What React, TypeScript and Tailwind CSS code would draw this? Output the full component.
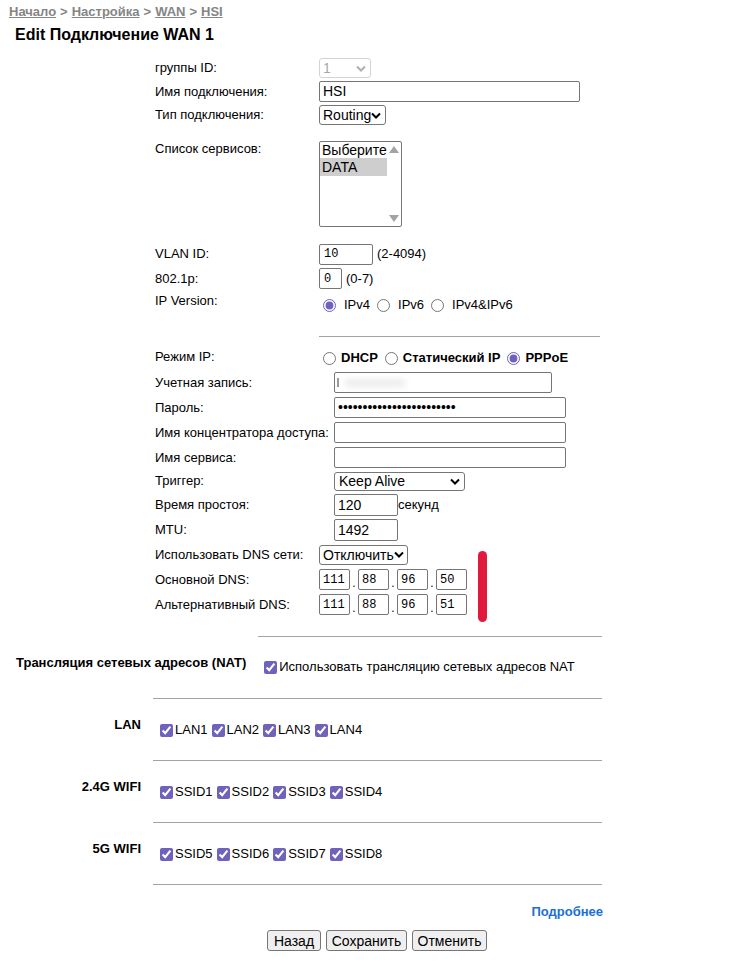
import React from "react";

function Chevron({ color = "#000" }: { color?: string }) {
  return (
    <svg width="10" height="7" viewBox="0 0 10 7" className="shrink-0">
      <path d="M1 1.5 L5 5.5 L9 1.5" fill="none" stroke={color} strokeWidth="2" />
    </svg>
  );
}

function FakeSelect({ value, className, disabled }: { value: string; className: string; disabled?: boolean }) {
  return (
    <div
      className={
        "flex items-center justify-between rounded-[3px] border bg-white pl-[3px] pr-[4px] text-[14px] leading-none " +
        (disabled ? "border-[#d4d4d4] text-[#a8a8a8] " : "border-[#767676] text-black ") +
        className
      }
    >
      <span>{value}</span>
      <Chevron color={disabled ? "#b0b0b0" : "#000"} />
    </div>
  );
}

function TextBox({ value = "", className, mono, type = "text" }: { value?: string; className: string; mono?: boolean; type?: string }) {
  return (
    <input
      type={type}
      readOnly
      value={value}
      className={
        "h-[21px] rounded-[2px] border border-[#767676] bg-white px-[3px] outline-none " +
        (mono ? "font-['Liberation_Mono'] text-[12px] " : "text-[14px] ") +
        className
      }
    />
  );
}

function Radio({ checked, label, bold }: { checked?: boolean; label: string; bold?: boolean }) {
  return (
    <label className="flex items-center">
      <input type="radio" readOnly checked={!!checked} className="m-0 h-[13px] w-[13px] accent-[#6f62bd]" />
      <span className={"ml-[5px] mr-[7px] " + (bold ? "font-bold" : "ml-[8px]")}>{label}</span>
    </label>
  );
}

function Check({ label }: { label: string }) {
  return (
    <label className="mr-[4px] flex items-center">
      <input type="checkbox" readOnly checked className="m-0 h-[13px] w-[13px] accent-[#6f62bd]" />
      <span className="ml-[2px]">{label}</span>
    </label>
  );
}

function Row({ label, w, h, children }: { label: string; w: string; h: string; children: React.ReactNode }) {
  return (
    <div className={"flex items-center " + h}>
      <div className={"shrink-0 " + w}>{label}</div>
      {children}
    </div>
  );
}

function IpBoxes({ last }: { last: string }) {
  const parts = ["111", "88", "96", last];
  return (
    <div className="flex items-center">
      {parts.map((p, i) => (
        <React.Fragment key={i}>
          <TextBox value={p} mono className="w-[31px] px-[2px]" />
          {i < 3 && <span className="w-[8px] text-center text-[12px] leading-none pt-[6px]">.</span>}
        </React.Fragment>
      ))}
    </div>
  );
}

function Section({ label, items }: { label: string; items: string[] }) {
  return (
    <div className="h-[62px] border-t border-[#a3a3a3] ml-[153px] w-[449px]">
      <div className="-ml-[153px] flex items-start pt-[18px]">
        <div className="w-[141px] text-right font-bold leading-[16px]">{label}</div>
        <div className="ml-[19px] flex pt-[5px] leading-[16px]">
          {items.map((it) => (
            <Check key={it} label={it} />
          ))}
        </div>
      </div>
    </div>
  );
}

export default function App() {
  return (
    <div className="relative min-h-[971px] w-[742px] bg-white font-['Liberation_Sans',Arial,sans-serif] text-[13px] text-black">
      <div className="flex h-[24px] items-center pl-[9px] font-bold text-[#858585]">
        <a className="underline">Начало</a>
        <span className="mx-[4px]">&gt;</span>
        <a className="underline">Настройка</a>
        <span className="mx-[4px]">&gt;</span>
        <a className="underline">WAN</a>
        <span className="mx-[4px]">&gt;</span>
        <a className="underline">HSI</a>
      </div>
      <h1 className="flex h-[22px] items-center pl-[15px] text-[16px] font-bold">Edit Подключение WAN 1</h1>

      <div className="pl-[155px] pt-[10px]">
        <Row label="группы ID:" w="w-[164px]" h="h-[24px]">
          <FakeSelect value="1" disabled className="h-[20px] w-[52px]" />
        </Row>
        <Row label="Имя подключения:" w="w-[164px]" h="h-[23px]">
          <TextBox value="HSI" className="w-[261px]" />
        </Row>
        <Row label="Тип подключения:" w="w-[164px]" h="h-[24px]">
          <FakeSelect value="Routing" className="h-[20px] w-[67px]" />
        </Row>

        <div className="mt-[14px] flex items-start">
          <div className="w-[164px] leading-[15px]">Список сервисов:</div>
          <div className="flex h-[86px] w-[83px] rounded-[2px] border border-[#767676] bg-white text-[14px]">
            <div className="flex-1">
              <div className="pl-[2px] leading-[16px]">Выберите</div>
              <div className="bg-[#cecece] pl-[2px] leading-[18px]">DATA</div>
            </div>
            <div className="flex w-[15px] flex-col items-center justify-between py-[4px]">
              <svg width="10" height="7" viewBox="0 0 10 7"><path d="M5 0 L10 7 L0 7 Z" fill="#a3a3a3" /></svg>
              <svg width="10" height="7" viewBox="0 0 10 7"><path d="M0 0 L10 0 L5 7 Z" fill="#a3a3a3" /></svg>
            </div>
          </div>
        </div>

        <div className="mt-[15px] flex h-[24px] items-center">
          <div className="w-[164px]">VLAN ID:</div>
          <TextBox value="10" mono className="h-[20px] w-[54px] px-[4px]" />
          <span className="ml-[4px]">(2-4094)</span>
        </div>
        <div className="flex h-[25px] items-center">
          <div className="w-[164px]">802.1p:</div>
          <TextBox value="0" mono className="h-[20px] w-[23px] px-[4px]" />
          <span className="ml-[4px]">(0-7)</span>
        </div>
        <div className="flex h-[23px] items-start">
          <div className="w-[168px] pt-[2px] leading-[16px]">IP Version:</div>
          <div className="flex pt-[6px] leading-[16px]">
            <Radio checked label="IPv4" />
            <Radio label="IPv6" />
            <Radio label="IPv4&IPv6" />
          </div>
        </div>

        <div className="ml-[164px] mt-[22px] w-[281px] border-t border-[#a3a3a3]" />

        <div className="mt-[10px] flex h-[20px] items-center">
          <div className="w-[168px]">Режим IP:</div>
          <div className="flex pt-[2px]">
            <Radio label="DHCP" bold />
            <Radio label="Статический IP" bold />
            <Radio checked label="PPPoE" bold />
          </div>
        </div>

        <div className="mt-[3px]">
          <Row label="Учетная запись:" w="w-[179px]" h="h-[25px]">
            <div className="flex h-[21px] w-[218px] items-center rounded-[2px] border border-[#767676] pl-[2px]">
              <span className="h-[9px] w-[2px] bg-[#9a9a9a] blur-[0.5px]" />
              <span className="ml-[6px] h-[8px] w-[60px] bg-[#ececec] blur-[3px]" />
            </div>
          </Row>
          <Row label="Пароль:" w="w-[179px]" h="h-[25px]">
            <TextBox type="password" value="abcdefghijklmnopqrstuvwx" className="w-[232px] text-[11px]" />
          </Row>
          <Row label="Имя концентратора доступа:" w="w-[179px]" h="h-[25px]">
            <TextBox className="w-[232px]" />
          </Row>
          <Row label="Имя сервиса:" w="w-[179px]" h="h-[25px]">
            <TextBox className="w-[232px]" />
          </Row>
          <Row label="Триггер:" w="w-[179px]" h="h-[22px]">
            <FakeSelect value="Keep Alive" className="h-[19px] w-[131px] pl-[4px]" />
          </Row>
          <Row label="Время простоя:" w="w-[179px]" h="h-[25px]">
            <TextBox value="120" className="h-[22px] w-[64px]" />
            <span>секунд</span>
          </Row>
          <Row label="MTU:" w="w-[179px]" h="h-[25px]">
            <TextBox value="1492" className="h-[22px] w-[64px]" />
          </Row>
        </div>

        <Row label="Использовать DNS сети:" w="w-[164px]" h="h-[25px]">
          <FakeSelect value="Отключить" className="h-[20px] w-[89px]" />
        </Row>
        <Row label="Основной DNS:" w="w-[164px]" h="h-[25px]">
          <IpBoxes last="50" />
        </Row>
        <Row label="Альтернативный DNS:" w="w-[164px]" h="h-[25px]">
          <IpBoxes last="51" />
        </Row>
      </div>

      <div className="ml-[258px] mt-[19px] h-[62px] w-[344px] border-t border-[#a3a3a3]">
        <div className="-ml-[242px] flex items-start pt-[18px]">
          <div className="font-bold leading-[16px]">Трансляция сетевых адресов (NAT)</div>
          <div className="ml-[18px] pt-[4px] leading-[16px]">
            <Check label="Использовать трансляцию сетевых адресов NAT" />
          </div>
        </div>
      </div>

      <Section label="LAN" items={["LAN1", "LAN2", "LAN3", "LAN4"]} />
      <Section label="2.4G WIFI" items={["SSID1", "SSID2", "SSID3", "SSID4"]} />
      <Section label="5G WIFI" items={["SSID5", "SSID6", "SSID7", "SSID8"]} />
      <div className="ml-[153px] w-[449px] border-t border-[#a3a3a3]" />

      <div className="mt-[19px] w-[603px] text-right font-bold leading-[16px] text-[#1a6fd6]">
        <a>Подробнее</a>
      </div>
      <div className="ml-[267px] mt-[10px] flex gap-[5px] text-[14px]">
        <button className="h-[21px] w-[54px] rounded-[3px] border border-[#767676] bg-[#efefef]">Назад</button>
        <button className="h-[21px] w-[81px] rounded-[3px] border border-[#767676] bg-[#efefef]">Сохранить</button>
        <button className="h-[21px] w-[75px] rounded-[3px] border border-[#767676] bg-[#efefef]">Отменить</button>
      </div>

      {/* red marker stroke drawn over the screenshot */}
      <div className="absolute left-[478px] top-[551px] h-[71px] w-[9px] rounded-full bg-[#e01a3c]" />
    </div>
  );
}
